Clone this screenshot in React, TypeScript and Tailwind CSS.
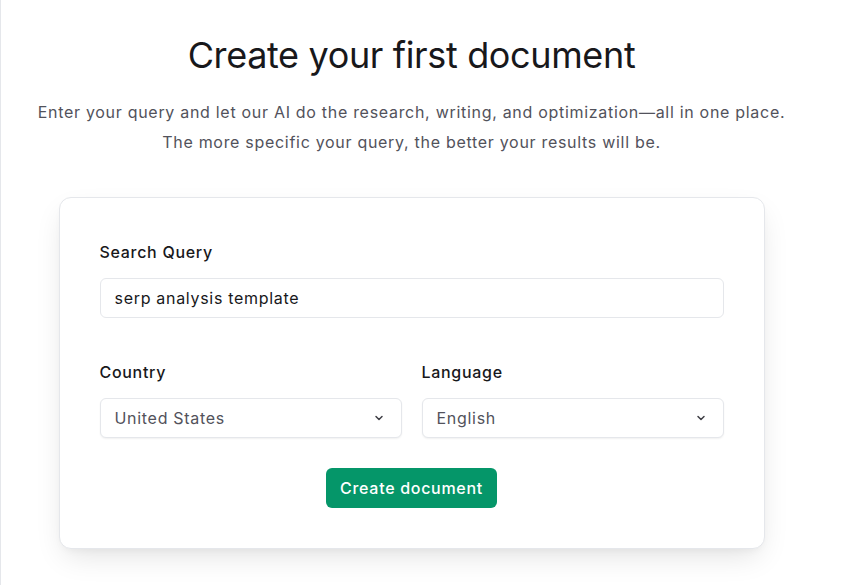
import React from "react";
import { ChevronDown } from "lucide-react";

function Select({ value }: { value: string }) {
  return (
    <div className="flex h-10 items-center justify-between rounded-md border border-gray-200 bg-white pl-[14px] pr-4 shadow-[0_1px_2px_rgba(0,0,0,0.06)]">
      <span className="text-base tracking-[0.7px] text-[#52525b]">{value}</span>
      <ChevronDown size={12} strokeWidth={3} className="text-[#3f3f46]" />
    </div>
  );
}

export default function App() {
  return (
    <div
      className="h-[585px] w-full border-l border-gray-200 bg-white"
      style={{ fontFamily: "Inter, 'Noto Sans', sans-serif" }}
    >
      <div className="flex w-[821px] flex-col items-center pt-[35px]">
        <h1 className="text-[36px] leading-10 font-normal text-[#18181b] tracking-[-0.01em]">
          Create your first document
        </h1>
        <p className="mt-[22px] text-center text-base leading-[30px] tracking-[0.7px] text-[#52525b]">
          Enter your query and let our AI do the research, writing, and optimization—all in one place.
          <br />
          The more specific your query, the better your results will be.
        </p>
        <div className="mt-10 w-[706px] rounded-xl border border-gray-200 bg-white p-10 shadow-[0_12px_30px_-6px_rgba(0,0,0,0.12),0_4px_10px_-4px_rgba(0,0,0,0.06)]">
          <div className="mb-3 text-base leading-7 font-medium tracking-[0.7px] text-[#18181b]">Search Query</div>
          <div className="flex h-10 items-center rounded-md border border-gray-200 pl-[14px] text-base tracking-[0.7px] text-[#18181b]">
            serp analysis template
          </div>
          <div className="mt-10 grid grid-cols-2 gap-5">
            <div>
              <div className="mb-3 text-base leading-7 font-medium tracking-[0.7px] text-[#18181b]">Country</div>
              <Select value="United States" />
            </div>
            <div>
              <div className="mb-3 text-base leading-7 font-medium tracking-[0.7px] text-[#18181b]">Language</div>
              <Select value="English" />
            </div>
          </div>
          <div className="mt-[30px] flex justify-center">
            <button className="h-10 rounded-md bg-[#059669] px-[14px] text-base font-medium tracking-[0.7px] text-white">
              Create document
            </button>
          </div>
        </div>
      </div>
    </div>
  );
}
